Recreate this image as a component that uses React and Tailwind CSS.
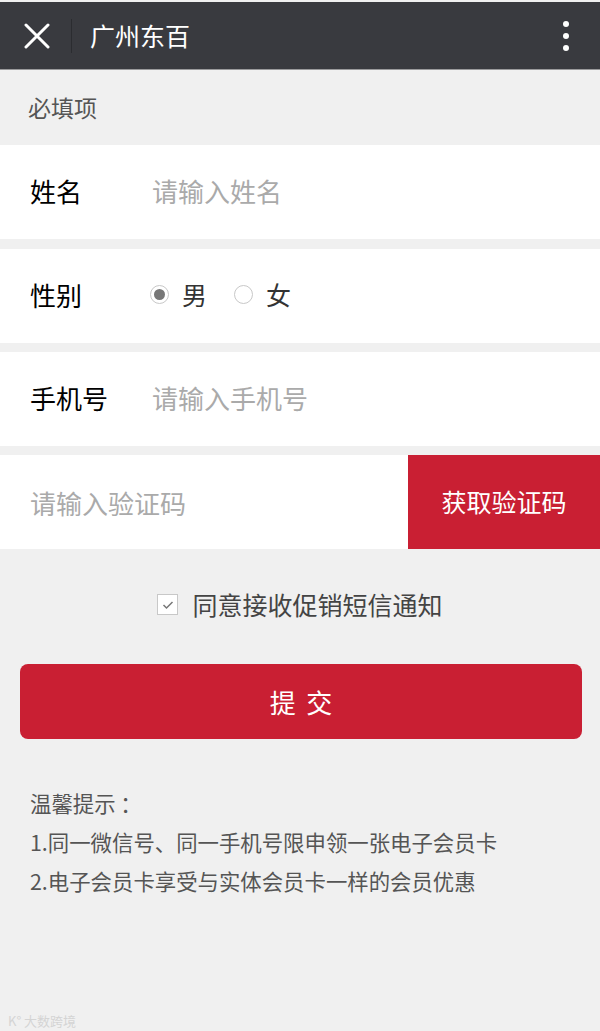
import React, { useState } from 'react';

const FONT = "font-['Noto_Sans_CJK_SC','Noto_Sans',sans-serif]";

function Radio({ checked, label, onClick }) {
  return (
    <button onClick={onClick} className="flex items-center gap-[13px]">
      <span className="w-[19px] h-[19px] rounded-full border border-[#c8c8c8] bg-white flex items-center justify-center">
        {checked && <span className="w-[11px] h-[11px] rounded-full bg-[#777]" />}
      </span>
      <span className="text-[25px] text-[#333] leading-none">{label}</span>
    </button>
  );
}

export default function App() {
  const [sex, setSex] = useState('m');
  const [agree, setAgree] = useState(true);

  return (
    <div className={`${FONT} w-[600px] h-[1031px] bg-[#f0f0f0] flex flex-col overflow-hidden`}>
      {/* top bar */}
      <div className="mt-[2px] h-[68px] bg-[#393a3f] flex items-center border-b border-[#9a9a9c]">
        <div className="w-[71px] flex justify-center">
          <svg width="26" height="26" viewBox="0 0 26 26" className="ml-[2px]">
            <path d="M2 2 L24 24 M24 2 L2 24" stroke="white" strokeWidth="3" strokeLinecap="round" />
          </svg>
        </div>
        <div className="w-px h-[34px] bg-[#2b2c30]" />
        <div className="ml-[18px] text-white text-[25px] leading-none">广州东百</div>
        <div className="ml-auto mr-[31px] flex flex-col gap-[6px]">
          <span className="w-[6px] h-[6px] rounded-full bg-white" />
          <span className="w-[6px] h-[6px] rounded-full bg-white" />
          <span className="w-[6px] h-[6px] rounded-full bg-white" />
        </div>
      </div>

      {/* section title */}
      <div className="h-[75px] flex items-center pl-[28px] text-[23px] text-[#555]">必填项</div>

      {/* name */}
      <div className="h-[94px] bg-white flex items-center pl-[30px] pb-[3px]">
        <span className="w-[122px] text-[26px] text-black">姓名</span>
        <input
          placeholder="请输入姓名"
          className="flex-1 text-[26px] outline-none placeholder:text-[#aaa] bg-transparent"
        />
      </div>

      <div className="h-[10px]" />

      {/* gender */}
      <div className="h-[94px] bg-white flex items-center pl-[30px] pb-[3px]">
        <span className="w-[120px] text-[26px] text-black">性别</span>
        <div className="flex items-center gap-[27px]">
          <Radio checked={sex === 'm'} label="男" onClick={() => setSex('m')} />
          <Radio checked={sex === 'f'} label="女" onClick={() => setSex('f')} />
        </div>
      </div>

      <div className="h-[9px]" />

      {/* phone */}
      <div className="h-[94px] bg-white flex items-center pl-[30px] pb-[3px]">
        <span className="w-[122px] text-[26px] text-black">手机号</span>
        <input
          placeholder="请输入手机号"
          className="flex-1 text-[26px] outline-none placeholder:text-[#aaa] bg-transparent"
        />
      </div>

      <div className="h-[9px]" />

      {/* code */}
      <div className="h-[94px] bg-white flex items-stretch">
        <input
          placeholder="请输入验证码"
          className="flex-1 min-w-0 pl-[30px] text-[26px] outline-none placeholder:text-[#aaa] bg-transparent"
        />
        <button className="w-[192px] bg-[#c91f33] text-white text-[25px]">获取验证码</button>
      </div>

      {/* agree */}
      <div className="mt-[37px] flex items-center justify-center gap-[14px]">
        <button
          onClick={() => setAgree(!agree)}
          className="w-[21px] h-[21px] border border-[#c8c8c8] bg-white flex items-center justify-center"
        >
          {agree && (
            <svg width="12" height="10" viewBox="0 0 12 10">
              <path d="M1.5 5 L4.5 8 L10.5 2" stroke="#777" strokeWidth="1.5" fill="none" />
            </svg>
          )}
        </button>
        <span className="text-[25px] text-[#444]">同意接收促销短信通知</span>
      </div>

      {/* submit */}
      <button className="ml-[20px] mr-[18px] mt-[40px] h-[75px] rounded-[8px] bg-[#c91f33] text-white text-[26px] tracking-[0.4em] pl-[0.4em]">
        提交
      </button>

      {/* tips */}
      <div className="mt-[44px] px-[30px] text-[21.4px] text-[#555] leading-[39px]">
        <p>温馨提示 ：</p>
        <p>1.同一微信号、同一手机号限申领一张电子会员卡</p>
        <p>2.电子会员卡享受与实体会员卡一样的会员优惠</p>
      </div>

      <div className="mt-auto pl-[8px] pb-[4px] text-[13px] text-[#d4d4d4] leading-none">K° 大数跨境</div>
    </div>
  );
}
